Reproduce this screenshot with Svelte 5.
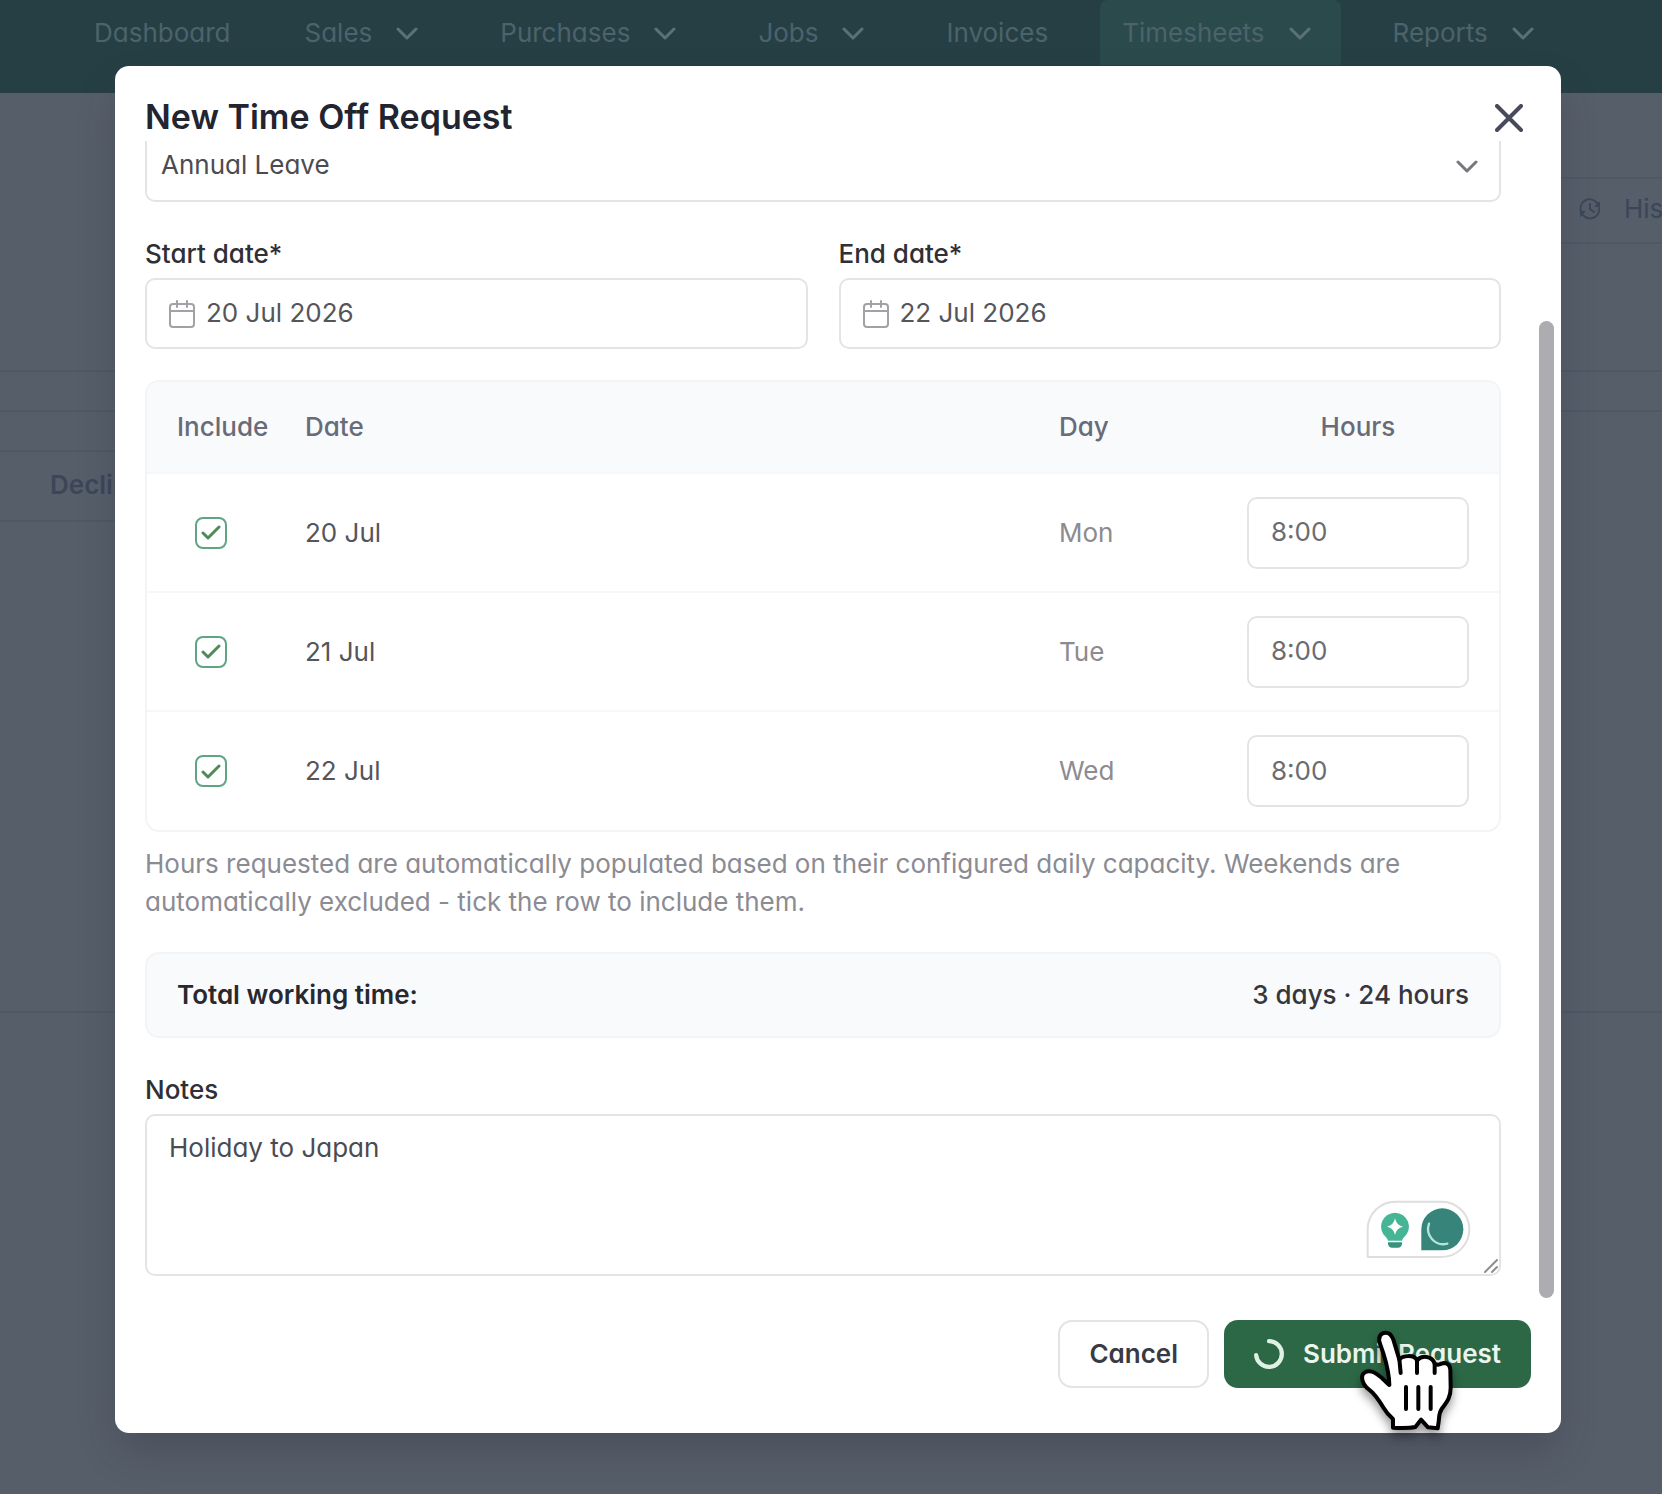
<script lang="ts">
  const navItems = [
    { label: 'Dashboard', menu: false },
    { label: 'Sales', menu: true },
    { label: 'Purchases', menu: true },
    { label: 'Jobs', menu: true },
    { label: 'Invoices', menu: false },
    { label: 'Timesheets', menu: true, active: true },
    { label: 'Reports', menu: true },
  ];

  let leaveType = $state('Annual Leave');
  let startDate = $state('20 Jul 2026');
  let endDate = $state('22 Jul 2026');
  let notes = $state('Holiday to Japan');
  let days = $state([
    { date: '20 Jul', day: 'Mon', hours: '8:00', include: true },
    { date: '21 Jul', day: 'Tue', hours: '8:00', include: true },
    { date: '22 Jul', day: 'Wed', hours: '8:00', include: true },
  ]);

  let included = $derived(days.filter((d) => d.include));
  let totalHours = $derived(included.reduce((sum, d) => sum + parseInt(d.hours || '0'), 0));
</script>

{#snippet chevron()}
  <svg class="chevron" viewBox="0 0 22 14" aria-hidden="true">
    <path d="M2 2l9 9 9-9" />
  </svg>
{/snippet}

{#snippet calendar()}
  <svg class="calendar" viewBox="0 0 26 28" aria-hidden="true">
    <rect x="1" y="4" width="24" height="23" rx="3" />
    <path d="M1 11h24M8 1v6M18 1v6" />
  </svg>
{/snippet}

<div class="app">
  <div class="page">
    <nav class="navbar">
      {#each navItems as item}
        <a href="#{item.label.toLowerCase()}" class="nav-item" class:active={item.active}>
          {item.label}
          {#if item.menu}{@render chevron()}{/if}
        </a>
      {/each}
    </nav>
    <div class="toolbar">
      <button class="history">
        <svg viewBox="0 0 22 22" aria-hidden="true">
          <path d="M2 13a9 9 0 0 1 15-9l3 3M20 10a9 9 0 0 1-15 8l-3-3M11 6v5l4 3" />
          <path class="solid" d="M21 3v6h-6zM1 19v-6h6z" />
        </svg>
        History
      </button>
    </div>
    <div class="strip"></div>
    <div class="tabs"><span>Declined</span></div>
    <div class="list"></div>
  </div>

  <div class="overlay">
    <div class="modal" role="dialog" aria-labelledby="modal-title">
      <header class="modal-header">
        <h2 id="modal-title">New Time Off Request</h2>
        <button class="close" aria-label="Close">
          <svg viewBox="0 0 28 28" aria-hidden="true"><path d="M2 2l24 24M26 2L2 26" /></svg>
        </button>
      </header>

      <div class="modal-body">
        <div class="select-wrap">
          <select bind:value={leaveType} aria-label="Leave type">
            <option>Annual Leave</option>
            <option>Sick Leave</option>
          </select>
          {@render chevron()}
        </div>

        <div class="dates">
          <div class="field">
            <label for="start">Start date*</label>
            <div class="date-input">
              {@render calendar()}
              <input id="start" type="text" bind:value={startDate} />
            </div>
          </div>
          <div class="field">
            <label for="end">End date*</label>
            <div class="date-input">
              {@render calendar()}
              <input id="end" type="text" bind:value={endDate} />
            </div>
          </div>
        </div>

        <div class="table-wrap">
          <table>
            <thead>
              <tr>
                <th class="col-include">Include</th>
                <th>Date</th>
                <th class="col-day">Day</th>
                <th class="col-hours">Hours</th>
              </tr>
            </thead>
            <tbody>
              {#each days as row}
                <tr>
                  <td class="col-include">
                    <label class="check">
                      <input type="checkbox" bind:checked={row.include} aria-label="Include {row.date}" />
                      {#if row.include}
                        <svg viewBox="0 0 20 15" aria-hidden="true"><path d="M2 8l5 5L18 2" /></svg>
                      {/if}
                    </label>
                  </td>
                  <td>{row.date}</td>
                  <td class="col-day">{row.day}</td>
                  <td class="col-hours">
                    <input class="hours" type="text" bind:value={row.hours} aria-label="Hours for {row.date}" />
                  </td>
                </tr>
              {/each}
            </tbody>
          </table>
        </div>

        <p class="help">
          Hours requested are automatically populated based on their configured daily capacity. Weekends are
          automatically excluded - tick the row to include them.
        </p>

        <div class="total">
          <strong>Total working time:</strong>
          <span>{included.length} days · {totalHours} hours</span>
        </div>

        <div class="field">
          <label for="notes">Notes</label>
          <div class="notes-wrap">
            <textarea id="notes" bind:value={notes}></textarea>
            <svg class="assistant" viewBox="80 54 315 177" aria-hidden="true">
              <path class="pill" d="M85 225V142a83 83 0 0 1 83-83h139a83 83 0 0 1 0 166z" />
              <path fill="#45b596" d="M167 92a42 42 0 0 0-27 74q5 5 6 10h42q1-5 6-10a42 42 0 0 0-27-74z" />
              <path fill="#37917e" d="M146 181h42v5q-2 11-12 11h-18q-10 0-12-11z" />
              <path fill="#fff" d="M167 109q4 21 24 25-20 4-24 25-4-21-24-25 20-4 24-25z" />
              <path fill="#37857a" d="M309 79a63 63 0 0 1 0 126h-63v-63a63 63 0 0 1 63-63z" />
              <path class="arc" d="M269 125a46 46 0 0 0 55 60" />
            </svg>
            <svg class="grip" viewBox="0 0 14 14" aria-hidden="true"><path d="M1 13L13 1M8 13l5-5" /></svg>
          </div>
        </div>

        <div class="scrollbar"></div>
      </div>

      <footer class="modal-footer">
        <button class="btn cancel">Cancel</button>
        <button class="btn submit">
          <svg class="spinner" viewBox="0 0 28 28" aria-hidden="true"><path d="M14 2a12 12 0 1 1-12 13" /></svg>
          Submit Request
          <svg class="pointer" viewBox="54 54 294 312" aria-hidden="true">
            <path
              class="hand"
              d="M159 350V324C149 315 139 305 131 291C119 271 105 249 90 238C74 227 66 212 66 198C68 184 82 178 96 182C116 188 130 206 148 222L147 204C143 166 129 122 120 98C113 78 122 65 137 65C150 65 156 74 160 86L178 146C188 133 222 130 231 148C246 132 276 134 284 158C298 166 300 158 312 156C324 156 330 164 331 176L332 230C332 262 318 276 305 294C296 307 298 318 296 332L293 352L264 349L243 326L226 348Q206 352 159 350Z"
            />
            <path class="crease" d="M178 144l4 42M231 148v38M284 158v28" />
            <path class="lines" d="M198 228v66M235 228v66M272 228v66" />
          </svg>
        </button>
      </footer>
    </div>
  </div>
</div>

<style>
  :global(body) {
    background: #565e6a;
    overflow: hidden;
  }
  .app {
    position: relative;
    min-height: 100vh;
    font-family: Inter, 'Liberation Sans', sans-serif;
    font-feature-settings: 'cv11';
    font-size: 26px;
    line-height: 38px;
    color: #3f3f46;
  }
  .app * {
    box-sizing: border-box;
  }
  button,
  input,
  select,
  textarea {
    font: inherit;
    font-feature-settings: inherit;
    color: inherit;
  }
  svg {
    fill: none;
    stroke-linecap: round;
    stroke-linejoin: round;
    flex: none;
  }

  /* dimmed page */
  .page {
    position: absolute;
    inset: 0;
    overflow: hidden;
  }
  .navbar {
    display: flex;
    gap: 30px;
    height: 93px;
    padding: 0 72px;
    background: #263f45;
    color: #4c636b;
  }
  .nav-item {
    display: flex;
    align-items: center;
    height: 65px;
    padding: 0 22px;
    color: inherit;
    text-decoration: none;
  }
  .nav-item.active {
    background: #2b4a4b;
    border-radius: 8px 8px 0 0;
  }
  .chevron {
    width: 22px;
    height: 14px;
    stroke: currentColor;
    stroke-width: 3;
  }
  .nav-item .chevron {
    margin: 2px 8px 0 24px;
    stroke: #5b7179;
  }
  .toolbar {
    display: flex;
    justify-content: flex-end;
    margin-top: 84px;
  }
  .history {
    display: flex;
    align-items: center;
    gap: 23px;
    height: 67px;
    margin-right: -76px;
    padding: 0 24px 4px 60px;
    background: none;
    border: 2px solid #4e5866;
    color: #3b4659;
  }
  .history svg {
    width: 22px;
    height: 22px;
    stroke: #3b4659;
    stroke-width: 2;
  }
  .history .solid {
    fill: #3b4659;
    stroke: none;
  }
  .strip {
    height: 42px;
    margin-top: 126px;
    border: solid #4e5866;
    border-width: 2px 0;
  }
  .tabs {
    width: 50%;
    height: 72px;
    margin-top: 38px;
    padding: 14px 50px;
    border: solid #4e5866;
    border-width: 2px 0;
    color: #3b4659;
    font-weight: 600;
  }
  .list {
    height: 491px;
    border-bottom: 2px solid #4e5866;
  }

  /* modal */
  .overlay {
    position: relative;
    padding: 66px 101px 60px 115px;
  }
  .modal {
    background: #fff;
    border-radius: 14px;
    box-shadow: 0 20px 40px -8px rgba(50, 50, 62, 0.4);
  }
  .modal-header {
    display: flex;
    justify-content: space-between;
    height: 75px;
    padding: 30px 31px 0 30px;
  }
  h2 {
    margin: 0;
    font-size: 34px;
    line-height: 42px;
    font-weight: 600;
    color: #22242f;
  }
  .close {
    width: 42px;
    height: 44px;
    padding: 8px 7px;
    background: none;
    border: 0;
  }
  .close svg {
    display: block;
    width: 28px;
    height: 28px;
    stroke: #474a5a;
    stroke-width: 4;
  }
  .modal-body {
    position: relative;
    display: flex;
    flex-direction: column;
    padding: 0 60px 28px 30px;
    overflow: hidden;
  }
  .select-wrap {
    position: relative;
    margin-top: -10px;
  }
  select,
  .date-input,
  .hours,
  textarea {
    display: block;
    width: 100%;
    height: 71px;
    border: 2px solid #e4e4e7;
    border-radius: 10px;
    background: #fff;
  }
  select {
    appearance: none;
    padding: 0 14px 3px;
    color: #4b4b52;
  }
  .select-wrap .chevron {
    position: absolute;
    right: 23px;
    top: 29px;
    stroke: #77777d;
  }
  .dates {
    display: grid;
    grid-template-columns: 1fr 1fr;
    gap: 31px;
    margin-top: 33px;
  }
  .field > label {
    display: block;
    margin-bottom: 5px;
    font-weight: 500;
    color: #2f2f35;
  }
  .date-input {
    display: flex;
    align-items: center;
    gap: 11px;
    padding: 0 22px;
    color: #55555b;
  }
  .date-input input {
    width: 100%;
    min-width: 0;
    padding: 0 0 2px;
    border: 0;
    background: none;
  }
  .calendar {
    width: 26px;
    height: 28px;
    stroke: #a2a2a6;
    stroke-width: 2;
  }

  .table-wrap {
    margin-top: 31px;
    border: 2px solid #f3f4f5;
    border-radius: 14px;
    overflow: hidden;
  }
  table {
    width: 100%;
    border-collapse: collapse;
    table-layout: fixed;
  }
  th,
  td {
    padding: 0 16px;
    text-align: left;
  }
  th {
    height: 91px;
    background: #f9fafc;
    color: #686b78;
    font-weight: 500;
  }
  td {
    height: 119px;
    border-top: 2px solid #f7f7f8;
    color: #55555b;
  }
  .col-include {
    width: 142px;
    padding: 0 0 0 30px;
  }
  .col-day {
    width: 188px;
  }
  td.col-day {
    color: #8b8b91;
  }
  .col-hours {
    width: 268px;
    padding-right: 30px;
  }
  th.col-hours {
    text-align: center;
  }
  .hours {
    height: 72px;
    padding: 0 22px 2px;
    color: #6b6b70;
  }
  .check {
    position: relative;
    display: grid;
    place-items: center;
    width: 32px;
    height: 32px;
    margin-left: 18px;
  }
  .check input {
    appearance: none;
    width: 32px;
    height: 32px;
    margin: 0;
    border: 2px solid #5fa584;
    border-radius: 8px;
  }
  .check svg {
    position: absolute;
    width: 20px;
    height: 15px;
    stroke: #4f8a58;
    stroke-width: 3;
    pointer-events: none;
  }

  .help {
    margin: 13px 0 31px;
    color: #8b8b93;
  }
  .total {
    display: flex;
    align-items: center;
    justify-content: space-between;
    height: 86px;
    margin-bottom: 33px;
    padding: 0 30px;
    background: #f9fafc;
    border: 2px solid #f3f4f5;
    border-radius: 14px;
    color: #36363c;
    font-weight: 500;
  }
  .total strong {
    font-weight: 600;
    color: #28282e;
  }
  .notes-wrap {
    position: relative;
  }
  textarea {
    height: 162px;
    padding: 13px 22px;
    resize: none;
    color: #4b4b52;
  }
  .assistant {
    position: absolute;
    right: 30px;
    bottom: 17px;
    width: 105px;
    height: 59px;
  }
  .pill {
    fill: #fff;
    stroke: #dededf;
    stroke-width: 6;
  }
  .arc {
    stroke: #b4e4da;
    stroke-width: 7;
  }
  .grip {
    position: absolute;
    right: 3px;
    bottom: 3px;
    width: 14px;
    height: 14px;
    stroke: #8e8e8e;
    stroke-width: 2;
  }
  .scrollbar {
    position: absolute;
    top: 180px;
    right: 7px;
    bottom: 6px;
    width: 15px;
    border-radius: 8px;
    background: #adadb1;
  }

  .modal-footer {
    display: flex;
    justify-content: flex-end;
    gap: 15px;
    padding: 16px 30px 45px;
  }
  .btn {
    display: flex;
    align-items: center;
    height: 68px;
    border-radius: 14px;
    font-weight: 600;
  }
  .cancel {
    padding: 0 29px;
    background: #fff;
    border: 2px solid #e4e4e7;
    color: #3a3a44;
  }
  .submit {
    position: relative;
    gap: 19px;
    padding: 0 30px;
    background: #2c6846;
    border: 0;
    color: #eaf5ee;
  }
  .spinner {
    width: 30px;
    height: 30px;
    stroke: #dff0e5;
    stroke-width: 4;
  }
  .pointer {
    position: absolute;
    top: 9px;
    right: 75px;
    width: 98px;
    height: 104px;
    filter: drop-shadow(0 6px 5px rgba(0, 0, 0, 0.4));
  }
  .hand {
    fill: #fff;
    stroke: #000;
    stroke-width: 12;
  }
  .crease,
  .lines {
    stroke: #000;
    stroke-width: 12;
  }
</style>
